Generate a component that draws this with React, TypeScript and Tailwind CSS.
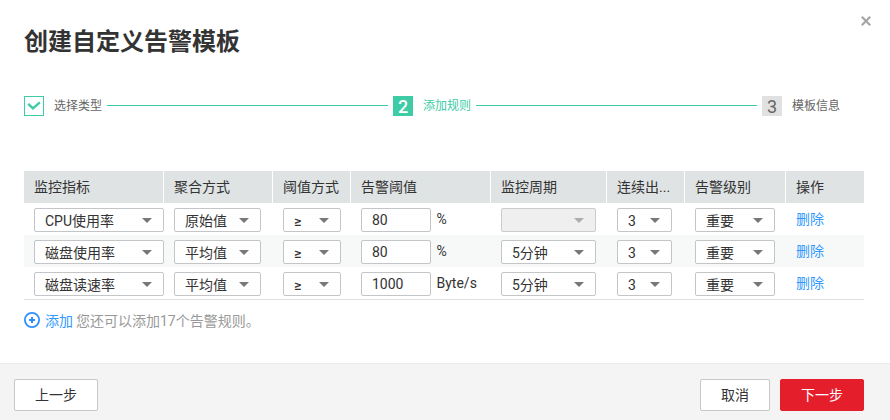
import type { ReactNode } from 'react';

function Select({ value, width, disabled = false, symbol = false }: { value: string; width: string; disabled?: boolean; symbol?: boolean }) {
  return (
    <div
      className={`flex h-6 items-center justify-between rounded-[2px] border pl-2.5 pr-[11px] ${width} ${
        disabled ? 'border-[#cccccc] bg-[#efefef]' : 'border-[#c3c5c6] bg-white'
      }`}
    >
      <span className={`whitespace-nowrap pt-px text-sm leading-[22px] ${symbol ? 'font-medium' : ''}`}>{value}</span>
      <svg className={`h-[5px] w-[10px] shrink-0 ${disabled ? 'text-[#adadad]' : 'text-[#777777]'}`} viewBox="0 0 10 5" fill="currentColor">
        <path d="M0 0h10L5 5z" />
      </svg>
    </div>
  );
}

const columns = ['监控指标', '聚合方式', '阈值方式', '告警阈值', '监控周期', '连续出...', '告警级别', '操作'];

const rows = [
  { metric: 'CPU使用率', method: '原始值', threshold: '80', unit: '%', period: '' },
  { metric: '磁盘使用率', method: '平均值', threshold: '80', unit: '%', period: '5分钟' },
  { metric: '磁盘读速率', method: '平均值', threshold: '1000', unit: 'Byte/s', period: '5分钟' },
];

const grid = 'grid grid-cols-[140px_109px_78px_140px_116px_78px_101px_78px]';

function Step({ marker, label, box, text }: { marker: ReactNode; label: string; box: string; text: string }) {
  return (
    <div className="flex shrink-0 items-center gap-2.5">
      <span className={`flex size-5 items-center justify-center text-lg leading-5 ${box}`}>{marker}</span>
      <span className={`whitespace-nowrap text-xs leading-5 ${text}`}>{label}</span>
    </div>
  );
}

function Connector() {
  return <i className="mx-[5px] mb-px h-px w-[281px] bg-[#3dcca6]" />;
}

export default function App() {
  return (
    <div className="flex h-[420px] w-[890px] flex-col overflow-hidden bg-white font-[Roboto,'Noto_Sans_CJK_SC',sans-serif] text-sm text-[#333333]">
      <header className="flex justify-between pl-6 pr-[19px]">
        <h1 className="pt-6 text-2xl font-bold leading-9">创建自定义告警模板</h1>
        <button aria-label="关闭" className="mt-[15.5px] size-[10px] text-[#a6a6a6]">
          <svg viewBox="0 0 10 10" className="size-[10px]" stroke="currentColor" strokeWidth="2.2">
            <path d="M.8.8l8.4 8.4M9.2.8L.8 9.2" />
          </svg>
        </button>
      </header>

      <div className="mt-9 flex w-[840px] items-center pl-6 box-content">
        <Step
          box="border border-[#3dcca6]"
          text="text-[#666666]"
          label="选择类型"
          marker={
            <svg viewBox="0 0 14 10" className="mb-px h-2.5 w-3.5" fill="none" stroke="#3dcca6" strokeWidth="2.4">
              <path d="M1.2 2.8L6 7.3L12.8 1.4" />
            </svg>
          }
        />
        <Connector />
        <Step box="bg-[#3dcca6] pt-0.5 font-medium text-white" text="text-[#3dcca6]" label="添加规则" marker="2" />
        <Connector />
        <Step box="bg-[#e1e1e1] pt-0.5 text-[#666666]" text="text-[#666666]" label="模板信息" marker="3" />
      </div>

      <div className="ml-6 mt-[55px] w-[840px] border-b border-[#dfe1e2]">
        <div className={`${grid} h-8 bg-[#dfe3e4]`}>
          {columns.map((c) => (
            <div key={c} className="border-r border-white pl-2.5 leading-8 last:border-r-0">
              {c}
            </div>
          ))}
        </div>
        {rows.map((r, i) => (
          <div key={r.metric} className={`${grid} h-8 *:pl-2.5 *:pt-[5px] ${i === 1 ? 'bg-[#f7f9f8]' : ''}`}>
            <div><Select width="w-[130px]" value={r.metric} /></div>
            <div><Select width="w-[87px]" value={r.method} /></div>
            <div><Select width="w-[58px]" value="≥" symbol /></div>
            <div className="flex gap-[5.5px]">
              <span className="h-6 w-[70px] shrink-0 rounded-[2px] border border-[#c3c5c6] bg-white pl-2.5 leading-[22px]">{r.threshold}</span>
              <span className="leading-[22px]">{r.unit}</span>
            </div>
            <div><Select width="w-[95px]" value={r.period} disabled={!r.period} /></div>
            <div><Select width="w-[55px]" value="3" /></div>
            <div><Select width="w-20" value="重要" /></div>
            <div><a className="leading-[22px] text-[#3399ff]">删除</a></div>
          </div>
        ))}
      </div>

      <div className="ml-6 mt-[10px] flex h-[22px] items-center leading-[22px]">
        <svg viewBox="0 0 16 16" className="mr-[5px] mb-0.5 size-4" fill="none" stroke="#2f8fff">
          <circle cx="8" cy="8" r="7.1" strokeWidth="1.8" />
          <path d="M5 8h6M8 5v6" strokeWidth="2" />
        </svg>
        <span className="mr-[3px] text-[#3399ff]">添加</span>
        <span className="text-[#999999]">您还可以添加17个告警规则。</span>
      </div>

      <footer className="mt-auto flex h-[57px] items-start border-t border-[#ebebeb] bg-[#f4f4f4] pl-3.5 pr-[26px] pt-[15px] *:h-8 *:rounded-[2px] *:leading-[30px]">
        <button className="w-[84px] border border-[#c8c8c8] bg-white">上一步</button>
        <button className="ml-auto w-[70px] border border-[#c8c8c8] bg-white">取消</button>
        <button className="ml-2.5 w-[84px] border border-[#e51e2c] bg-[#e51e2c] text-white">下一步</button>
      </footer>
    </div>
  );
}
